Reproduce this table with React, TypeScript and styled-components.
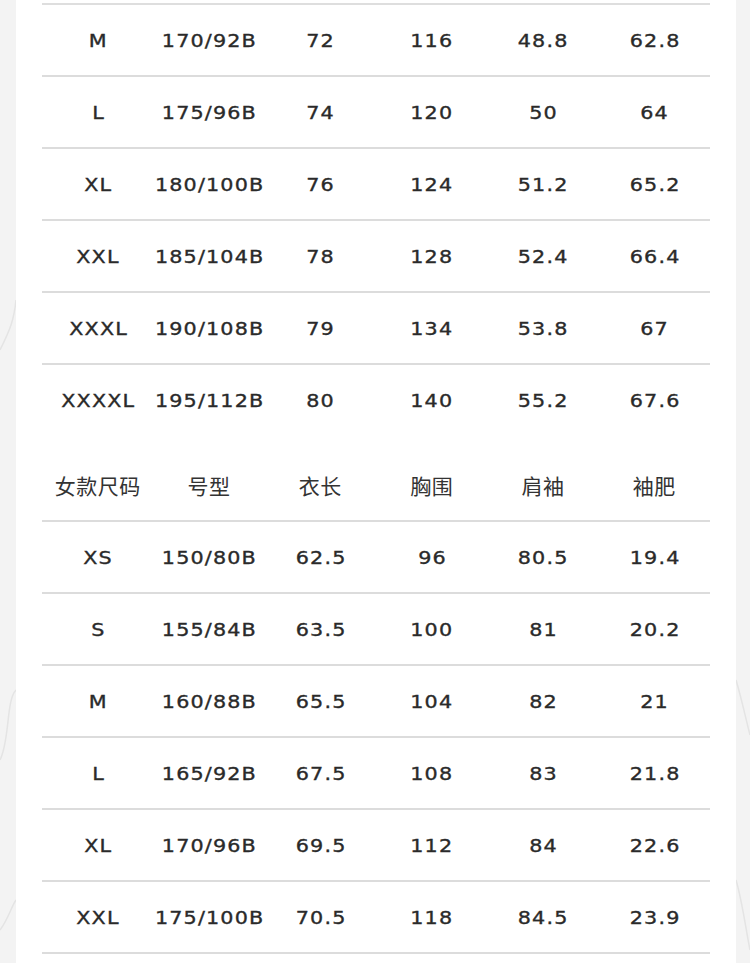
import React from 'react';
import styled, { createGlobalStyle } from 'styled-components';

const GlobalStyle = createGlobalStyle`
  html, body {
    margin: 0;
    padding: 0;
    background: #f3f3f3;
  }
`;

const Page = styled.div`
  position: relative;
  width: 750px;
  height: 963px;
  overflow: hidden;
  background: #f3f3f3;
`;

const Swirls = styled.svg`
  position: absolute;
  inset: 0;
  pointer-events: none;
`;

const Panel = styled.div`
  position: relative;
  margin-left: 16px;
  width: 720px;
  height: 963px;
  background: #ffffff;
  padding: 3px 26px 0 26px;
  box-sizing: border-box;
`;

const Table = styled.div`
  display: flex;
  flex-direction: column;
  border-top: 2px solid #dedede;
`;

const Row = styled.div<{ $line?: boolean; $gap?: number }>`
  display: grid;
  grid-template-columns: repeat(6, 1fr);
  height: 70px;
  align-items: center;
  margin-top: ${(p) => p.$gap ?? 0}px;
  border-bottom: 2px solid ${(p) => (p.$line ? '#dcdcdc' : 'transparent')};
`;

const Cell = styled.div`
  display: flex;
  justify-content: center;
`;

const Value = styled.span`
  display: inline-block;
  font-family: 'DejaVu Sans', 'Liberation Sans', sans-serif;
  font-size: 18px;
  letter-spacing: 1px;
  padding-left: 1px;
  color: #2a2a2a;
  -webkit-text-stroke: 0.35px #2a2a2a;
  white-space: nowrap;
  transform: scaleX(1.15);
`;

const HeadCell = styled.div`
  text-align: center;
  font-family: 'Noto Sans CJK SC', 'Noto Sans', sans-serif;
  font-size: 21px;
  letter-spacing: 0.5px;
  color: #333333;
  white-space: nowrap;
`;

const men = [
  ['M', '170/92B', '72', '116', '48.8', '62.8'],
  ['L', '175/96B', '74', '120', '50', '64'],
  ['XL', '180/100B', '76', '124', '51.2', '65.2'],
  ['XXL', '185/104B', '78', '128', '52.4', '66.4'],
  ['XXXL', '190/108B', '79', '134', '53.8', '67'],
  ['XXXXL', '195/112B', '80', '140', '55.2', '67.6'],
];

const womenHead = ['女款尺码', '号型', '衣长', '胸围', '肩袖', '袖肥'];

const women = [
  ['XS', '150/80B', '62.5', '96', '80.5', '19.4'],
  ['S', '155/84B', '63.5', '100', '81', '20.2'],
  ['M', '160/88B', '65.5', '104', '82', '21'],
  ['L', '165/92B', '67.5', '108', '83', '21.8'],
  ['XL', '170/96B', '69.5', '112', '84', '22.6'],
  ['XXL', '175/100B', '70.5', '118', '84.5', '23.9'],
];

export default function App() {
  return (
    <Page>
      <GlobalStyle />
      <Swirls width="750" height="963" viewBox="0 0 750 963">
        <g fill="none" stroke="#e4e4e4" strokeWidth="1.5">
          <path d="M0 350 C 10 330, 14 320, 16 300" />
          <path d="M0 760 C 10 740, 6 700, 16 690" />
          <path d="M0 930 C 8 920, 12 905, 16 900" />
          <path d="M736 680 C 742 700, 746 720, 750 735" />
          <path d="M736 880 C 742 900, 746 930, 750 950" />
        </g>
      </Swirls>
      <Panel>
        <Table>
          {men.map((r, i) => (
            <Row key={'m' + i} $line={i < men.length - 1}>
              {r.map((c, j) => (
                <Cell key={j}>
                  <Value>{c}</Value>
                </Cell>
              ))}
            </Row>
          ))}
          <Row $line $gap={13}>
            {womenHead.map((c, j) => (
              <HeadCell key={j}>{c}</HeadCell>
            ))}
          </Row>
          {women.map((r, i) => (
            <Row key={'w' + i} $line>
              {r.map((c, j) => (
                <Cell key={j}>
                  <Value>{c}</Value>
                </Cell>
              ))}
            </Row>
          ))}
        </Table>
      </Panel>
    </Page>
  );
}
